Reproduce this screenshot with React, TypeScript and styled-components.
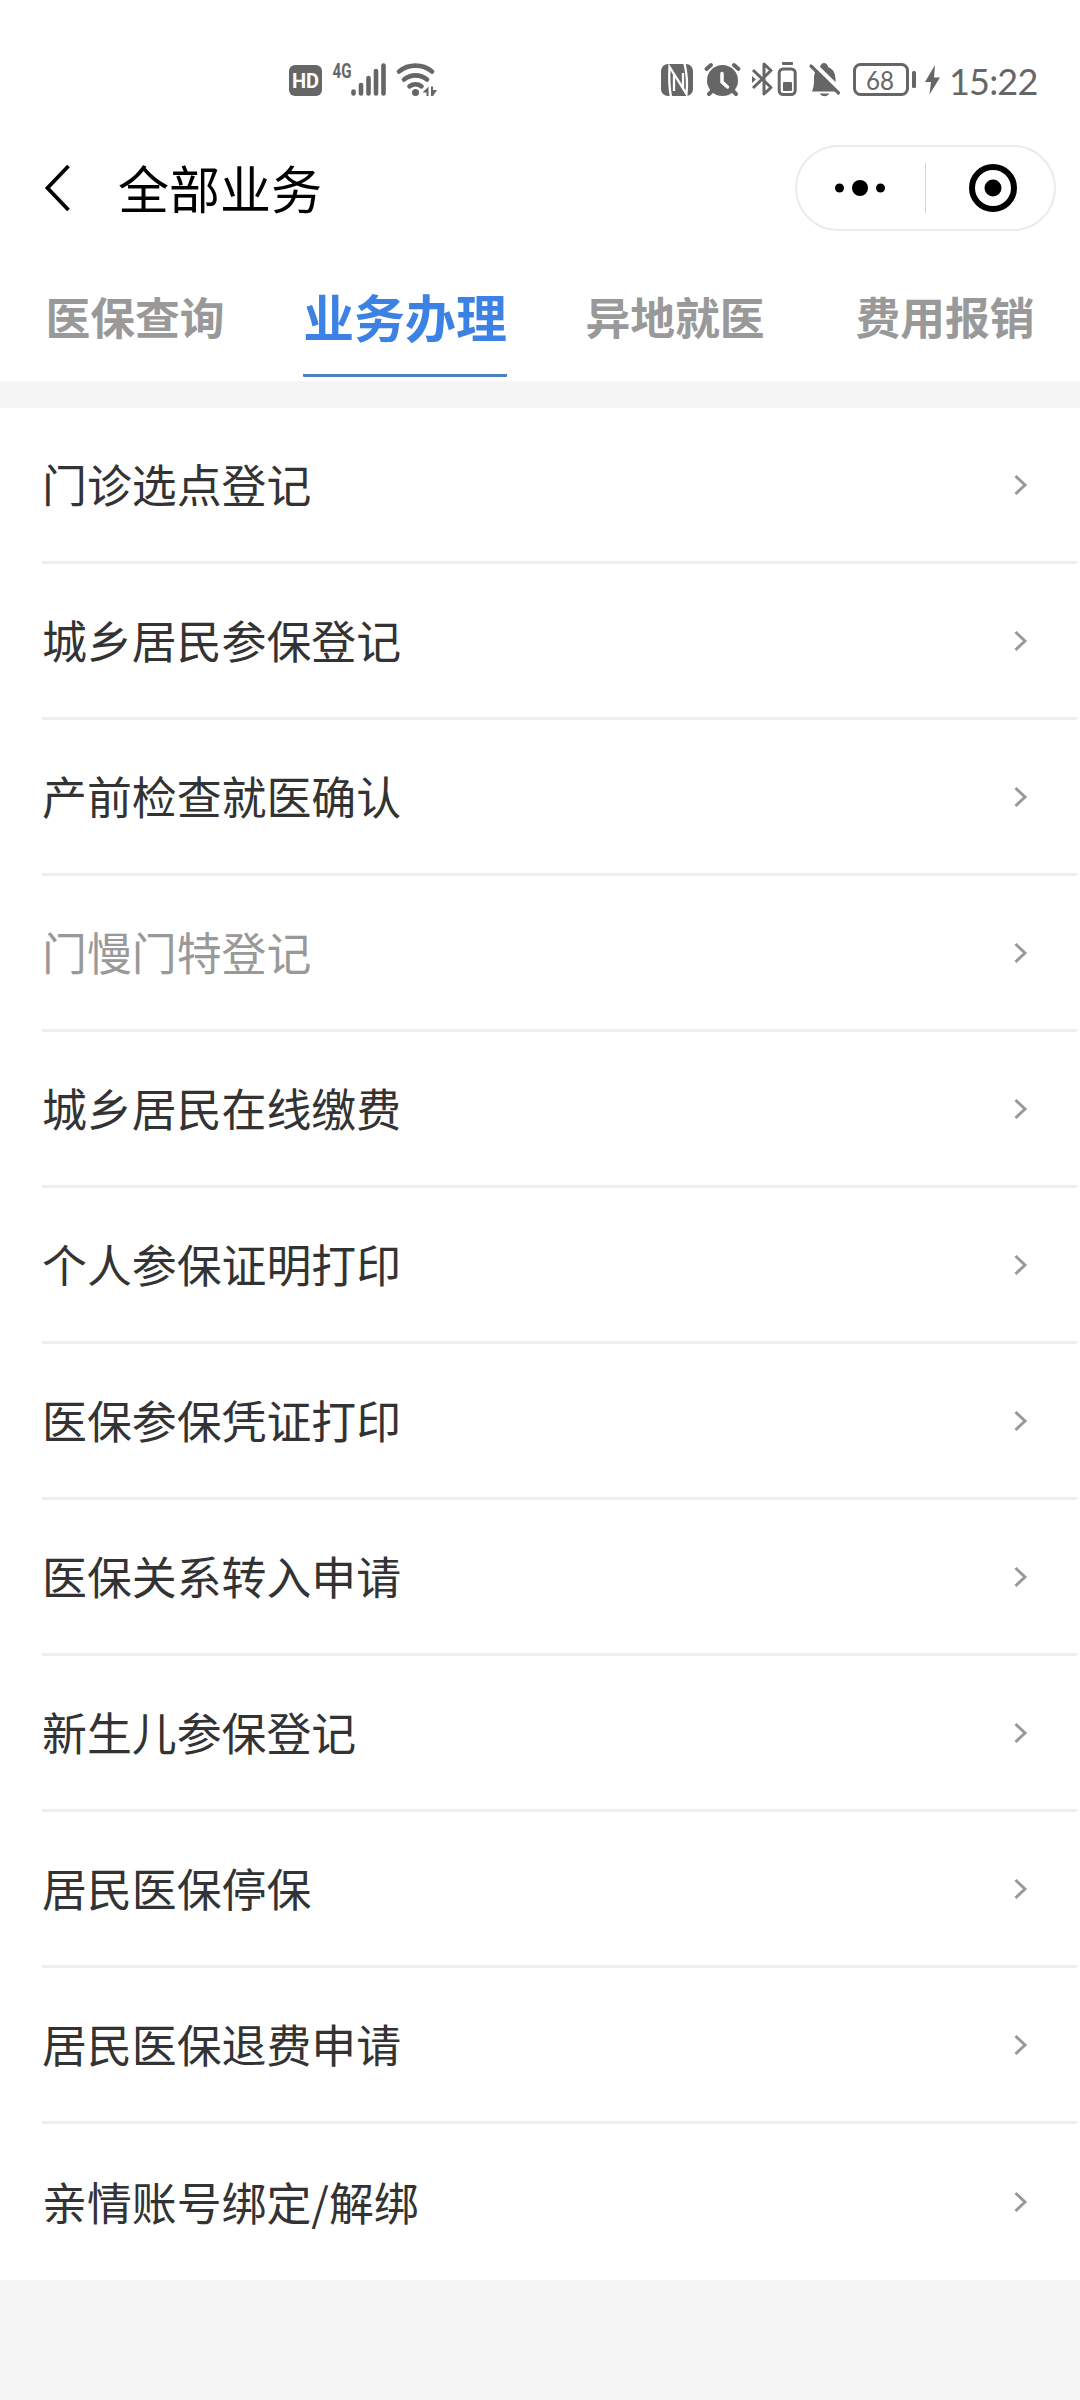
import React from "react";
import styled, { createGlobalStyle } from "styled-components";

const GlobalStyle = createGlobalStyle`
  * { box-sizing: border-box; }
  body {
    margin: 0;
    background: #f5f5f5;
    font-family: "Noto Sans CJK SC", "Noto Sans", sans-serif;
  }
`;

const Page = styled.div`
  display: flex;
  flex-direction: column;
  width: 1080px;
  min-height: 2400px;
  background: #f5f5f5;
`;

const StatusBar = styled.div`
  display: flex;
  align-items: flex-start;
  justify-content: space-between;
  height: 136px;
  padding: 50px 38px 0 280px;
  background: #fff;
  color: #666;
`;

const StatusIcons = styled.svg`
  display: block;
  flex: none;
`;

const StatusGroup = styled.div`
  display: flex;
`;

const Clock = styled.span`
  width: 93px;
  margin: 8px 0 0 4px;
  font: 36px/46px Lato, sans-serif;
  letter-spacing: -0.8px;
  white-space: nowrap;
`;

const NavBar = styled.header`
  display: flex;
  align-items: center;
  height: 104px;
  padding: 0 24px 0 40px;
  background: #fff;
`;

const BackButton = styled.button`
  display: flex;
  width: 78px;
  padding: 0;
  border: 0;
  background: none;
`;

const Title = styled.h1`
  flex: 1;
  margin: 0;
  padding-bottom: 3px;
  font-size: 51px;
  line-height: 72px;
  font-weight: 400;
  color: #000;
`;

const Capsule = styled.div`
  display: flex;
  align-items: center;
  width: 261px;
  height: 86px;
  border: 2px solid #ebebeb;
  border-radius: 43px;
`;

const CapsuleButton = styled.button<{ $inset: string }>`
  display: flex;
  flex: none;
  align-items: center;
  justify-content: center;
  width: 128px;
  padding: ${(p) => p.$inset};
  border: 0;
  background: none;
`;

const CapsuleDivider = styled.span`
  width: 1px;
  height: 50px;
  background: #d5d5d5;
`;

const Tabs = styled.nav`
  display: grid;
  grid-template-columns: repeat(4, 1fr);
  justify-items: center;
  height: 141px;
  background: #fff;
`;

const Tab = styled.a<{ $active?: boolean }>`
  height: 137px;
  padding-top: 20px;
  border-bottom: 3px solid ${(p) => (p.$active ? "#4a80bd" : "transparent")};
  border-radius: 1px;
  color: ${(p) => (p.$active ? "#3c82e4" : "#999")};
  font-size: ${(p) => (p.$active ? 50.9 : 44.8)}px;
  font-weight: 700;
  line-height: 112px;
  white-space: nowrap;
`;

const List = styled.ul`
  margin: 27px 0 0;
  padding: 0 3px 0 42px;
  list-style: none;
  background: #fff;
`;

const Row = styled.li<{ $muted?: boolean }>`
  display: flex;
  align-items: center;
  justify-content: space-between;
  height: 156px;
  padding-right: 49px;
  border-bottom: 3px solid #eee;
  color: ${(p) => (p.$muted ? "#999" : "#333")};
  font-size: 44.9px;
  line-height: 64px;

  &:last-child {
    border-bottom: 0;
  }
`;

const Label = styled.span`
  padding-bottom: 1px;
`;

const items = [
  { label: "门诊选点登记" },
  { label: "城乡居民参保登记" },
  { label: "产前检查就医确认" },
  { label: "门慢门特登记", muted: true },
  { label: "城乡居民在线缴费" },
  { label: "个人参保证明打印" },
  { label: "医保参保凭证打印" },
  { label: "医保关系转入申请" },
  { label: "新生儿参保登记" },
  { label: "居民医保停保" },
  { label: "居民医保退费申请" },
  { label: "亲情账号绑定/解绑" },
];

const tabs = ["医保查询", "业务办理", "异地就医", "费用报销"];

function SignalIcons() {
  return (
    <StatusIcons width="170" height="60" viewBox="280 50 170 60" fill="#666">
      <rect x="289" y="65" width="33" height="31" rx="6" />
      <text x="305.500" y="88" fontFamily="Roboto" fontWeight="700" fontSize="20" fill="#fff" textAnchor="middle">HD</text>
      <text x="332.500" y="77.500" fontFamily="Roboto" fontWeight="700" fontSize="20" textLength="19" lengthAdjust="spacingAndGlyphs">4G</text>
      <g stroke="#666" strokeWidth="4.600" strokeLinecap="round">
        <path d="M353.500 91.500v2M361 85v8.500M368.500 78v15.500M376 71v22.500M383.500 65.500v28" />
      </g>
      <g fill="none" stroke="#666" strokeWidth="4.600" strokeLinecap="round">
        <path d="M399 71.500a26 26 0 0 1 33 0M404 79.500a18 18 0 0 1 23 0M409.500 86.300a10 10 0 0 1 12 0" />
      </g>
      <circle cx="415.500" cy="92.500" r="3.500" />
      <path d="M428.500 86.500v9.500h-2v-3.500h-4zM431 86.500v9.500h2l4-6h-4v-3.500z" />
    </StatusIcons>
  );
}

function DeviceIcons() {
  return (
    <StatusIcons width="290" height="60" viewBox="655 50 290 60" fill="#666">
      <rect x="661" y="64" width="32" height="32" rx="7" />
      <path d="M671 97c-2-10-2-20-1.500-30L683 88V73M674 91V74l12.500 20c1-9 .5-20-2-30.500" fill="none" stroke="#fff" strokeWidth="2.300" />
      <circle cx="722.500" cy="80.500" r="15.500" />
      <path d="M706.500 69l4.500-4M738.500 69l-4.500-4M709 94l4-4M736 94l-4-4" stroke="#666" strokeWidth="4" strokeLinecap="round" />
      <path d="M722 73.500v8.500l5.500 5" fill="none" stroke="#fff" strokeWidth="3.500" strokeLinecap="round" />
      <g fill="none" stroke="#666" strokeWidth="3" strokeLinejoin="round">
        <path d="M753 70l18 17.500-7 6.500V64l7 6.500L753 88" />
        <rect x="779.200" y="69" width="16" height="25.500" rx="4" />
      </g>
      <path d="M752 76l4 3.500-4 3.500z" />
      <rect x="782" y="62" width="11" height="3" rx="1" />
      <rect x="783" y="82" width="9" height="9" rx="1" />
      <path d="M812 91.500c2-5 2-8 2-13 0-6 2.500-10 6-11.500.5-2 2-4 4-4s4 2 4 4c5 2 7.500 6 7.500 12.500 0 5 .5 8 2.500 12zM820 93.500h9c-1 3.500-8 3.500-9 0z" />
      <path d="M814 64l27.500 27" stroke="#fff" strokeWidth="4.500" />
      <path d="M811 66l27.500 27" stroke="#666" strokeWidth="3.200" strokeLinecap="round" />
      <rect x="854.500" y="64.500" width="53" height="30" rx="6" fill="none" stroke="#666" strokeWidth="3" />
      <text x="880" y="89.700" fontFamily="Lato" fontSize="26.500" textAnchor="middle" textLength="28" lengthAdjust="spacingAndGlyphs">68</text>
      <rect x="912" y="71" width="4" height="17" rx="1.500" />
      <path d="M935 65l-10 17h6l-1.500 12.500L940 77.500h-6z" />
    </StatusIcons>
  );
}

function Chevron() {
  return (
    <svg width="14" height="22" viewBox="0 0 14 22" fill="none" stroke="#999" strokeWidth="3">
      <path d="M1.500 2l9.500 9-9.500 9" />
    </svg>
  );
}

export default function App() {
  return (
    <Page>
      <GlobalStyle />
      <StatusBar>
        <SignalIcons />
        <StatusGroup>
          <DeviceIcons />
          <Clock>15:22</Clock>
        </StatusGroup>
      </StatusBar>
      <NavBar>
        <BackButton aria-label="返回">
          <svg width="34" height="50" viewBox="0 0 34 50" fill="none" stroke="#000" strokeWidth="3.800">
            <path d="M28.500 3L7.500 25l21 22" />
          </svg>
        </BackButton>
        <Title>全部业务</Title>
        <Capsule>
          <CapsuleButton $inset="0 2px 0 0" aria-label="更多">
            <svg width="50" height="16" viewBox="0 0 50 16">
              <circle cx="4.500" cy="8" r="4.500" />
              <circle cx="25" cy="8" r="8" />
              <circle cx="45.500" cy="8" r="4.500" />
            </svg>
          </CapsuleButton>
          <CapsuleDivider />
          <CapsuleButton $inset="0 0 0 6px" aria-label="关闭">
            <svg width="48" height="48" viewBox="0 0 48 48">
              <circle cx="24" cy="24" r="21" fill="none" stroke="#000" strokeWidth="6" />
              <circle cx="24" cy="24" r="8.500" />
            </svg>
          </CapsuleButton>
        </Capsule>
      </NavBar>
      <Tabs>
        {tabs.map((label, i) => (
          <Tab key={label} $active={i === 1}>{label}</Tab>
        ))}
      </Tabs>
      <List>
        {items.map((item) => (
          <Row key={item.label} $muted={item.muted}>
            <Label>{item.label}</Label>
            <Chevron />
          </Row>
        ))}
      </List>
    </Page>
  );
}
